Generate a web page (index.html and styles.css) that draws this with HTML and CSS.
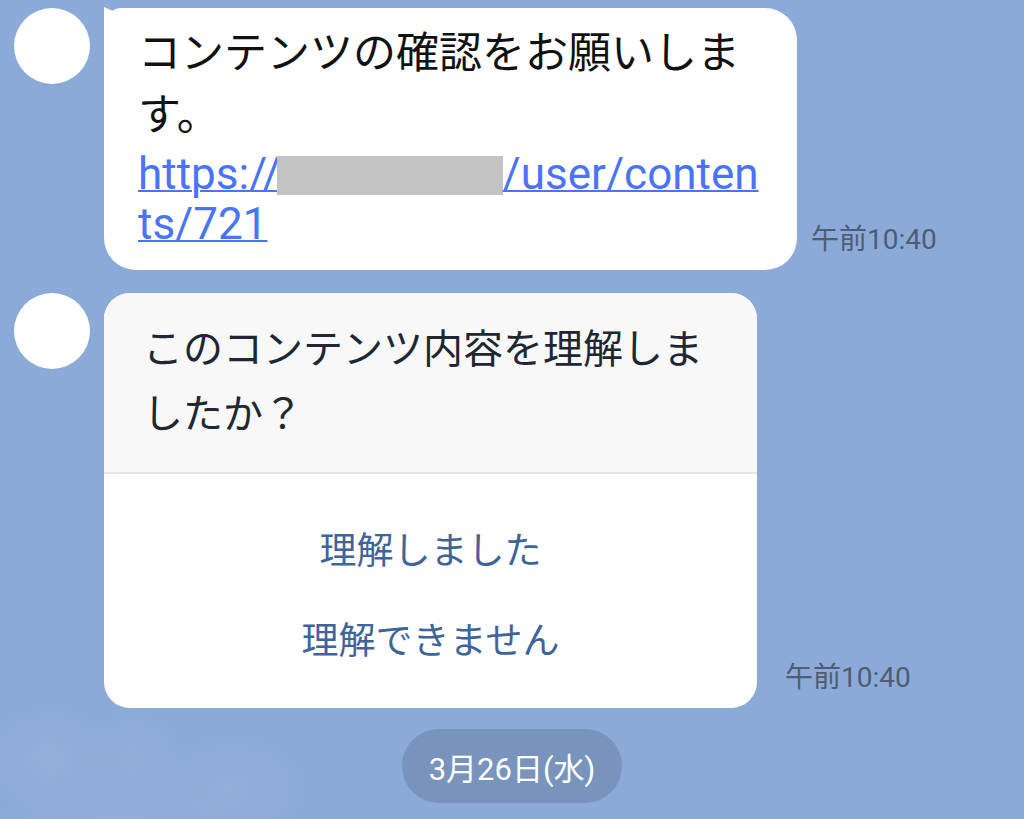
FILE: index.html
```html
<!DOCTYPE html>
<html lang="ja">
<head>
  <meta charset="UTF-8">
  <title>トーク</title>
  <link rel="stylesheet" href="styles.css">
</head>
<body>

<div class="chat">
  <div class="msg">
    <div class="avatar"></div>
    <div class="bubble text-bubble">
      <p class="text">コンテンツの確認をお願いしま<br>す。</p>
      <a class="link" href="#">https://<span class="mask"></span>/user/conten<br>ts/721</a>
    </div>
    <span class="time">午前10:40</span>
  </div>

  <div class="msg">
    <div class="avatar"></div>
    <div class="bubble card">
      <div class="card-head">このコンテンツ内容を理解しま<br>したか？</div>
      <div class="card-actions">
        <button class="action">理解しました</button>
        <button class="action">理解できません</button>
      </div>
    </div>
    <span class="time time-card">午前10:40</span>
  </div>

  <div class="date-row">
    <span class="date-pill">3月26日(水)</span>
  </div>
</div>

</body>
</html>
```

FILE: styles.css
```css
html, body {
  height: 100%;
}
body {
  margin: 0;
  font-family: Roboto, "Noto Sans CJK JP", sans-serif;
  background-color: #8caad8;
  background-image:
    radial-gradient(ellipse 80px 70px at 50px 760px, rgba(255,255,255,0.07), transparent 80%),
    radial-gradient(ellipse 70px 60px at 130px 760px, rgba(255,255,255,0.06), transparent 80%),
    radial-gradient(ellipse 100px 70px at 230px 790px, rgba(255,255,255,0.06), transparent 80%),
    radial-gradient(ellipse 160px 50px at 120px 819px, rgba(255,255,255,0.05), transparent 80%);
  overflow: hidden;
}
.chat {
  display: flex;
  flex-direction: column;
  padding: 8px 0 0 14px;
}
.msg {
  display: flex;
  align-items: flex-end;
}
.msg + .msg {
  margin-top: 23px;
}
.avatar {
  align-self: flex-start;
  width: 76px;
  height: 76px;
  border-radius: 50%;
  background: #fff;
  margin-right: 14px;
  flex-shrink: 0;
}
.bubble {
  position: relative;
  background: #fff;
  box-sizing: border-box;
}
.text-bubble {
  width: 693px;
  padding: 14px 34px 21px;
  border-radius: 18px 32px 32px 32px;
}
.text-bubble::before {
  content: "";
  position: absolute;
  left: 0;
  top: -1px;
  width: 22px;
  height: 22px;
  background: #fff;
  clip-path: polygon(0 0, 16px 7px, 22px 22px, 0 22px);
}
.text {
  margin: 0;
  font-size: 43px;
  line-height: 62px;
  color: #111;
}
.link {
  display: block;
  margin-top: 3px;
  font-size: 44px;
  line-height: 50px;
  color: #4a74f5;
  text-decoration: underline;
  text-decoration-thickness: 2px;
}
.mask {
  display: inline-block;
  width: 226px;
  height: 39px;
  margin-left: -4px;
  background: #c3c3c3;
  vertical-align: -6px;
}
.time {
  font-size: 28px;
  line-height: 32px;
  color: #4e5d74;
  margin: 0 0 14px 14px;
  white-space: nowrap;
}
.time-card {
  margin-left: 28px;
}
.card {
  width: 653px;
  border-radius: 26px;
  overflow: hidden;
}
.card-head {
  background: #f8f8f8;
  padding: 24px 39px 25px;
  font-size: 40px;
  line-height: 65px;
  color: #202733;
  border-bottom: 2px solid #e6e6e6;
}
.card-actions {
  display: flex;
  flex-direction: column;
  padding: 29px 0 25px;
}
.action {
  height: 90px;
  border: none;
  background: none;
  font-family: inherit;
  font-size: 37px;
  color: #3f6497;
  cursor: pointer;
  padding: 0;
}
.date-row {
  display: flex;
  justify-content: center;
  margin: 21px 0 0 -14px;
}
.date-pill {
  height: 74px;
  width: 220px;
  border-radius: 37px;
  background: #7894bc;
  color: #fff;
  font-size: 31px;
  display: flex;
  align-items: center;
  justify-content: center;
}
```
